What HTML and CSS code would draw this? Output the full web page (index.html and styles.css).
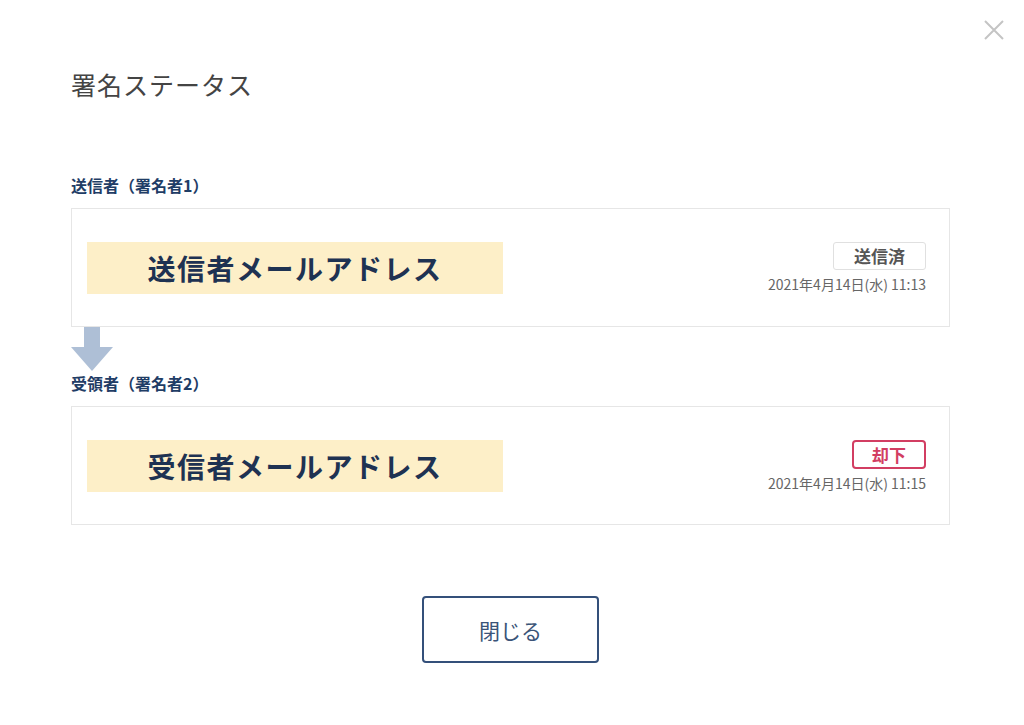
FILE: index.html
```html
<!DOCTYPE html>
<html lang="ja">
<head>
    <meta charset="UTF-8">
    <meta name="viewport" content="width=device-width, initial-scale=1.0">
    <title>署名ステータス</title>
    <link rel="stylesheet" href="styles.css">
</head>
<body>
    <div class="modal">
        <button class="close" aria-label="閉じる">
            <svg width="22" height="22" viewBox="0 0 22 22">
                <path d="M2 2 L20 20 M20 2 L2 20" stroke="#c4c4c4" stroke-width="2" fill="none"/>
            </svg>
        </button>

        <h1 class="title">署名ステータス</h1>

        <div class="signers">
            <!-- 送信者 -->
            <div class="label">送信者（署名者1）</div>
            <div class="card">
                <div class="email">送信者メールアドレス</div>
                <div class="status">
                    <span class="badge">送信済</span>
                    <span class="date">2021年4月14日(水) 11:13</span>
                </div>
            </div>

            <div class="arrow">
                <svg width="42" height="44" viewBox="0 0 42 44">
                    <path d="M13 0 H29 V20 H42 L21 44 L0 20 H13 Z" fill="#aebfd6"/>
                </svg>
            </div>

            <!-- 受領者 -->
            <div class="label">受領者（署名者2）</div>
            <div class="card">
                <div class="email">受信者メールアドレス</div>
                <div class="status">
                    <span class="badge rejected">却下</span>
                    <span class="date">2021年4月14日(水) 11:15</span>
                </div>
            </div>
        </div>

        <div class="footer">
            <button class="btn-close">閉じる</button>
        </div>
    </div>
</body>
</html>
```

FILE: styles.css
```css
/* ページ全体 */
body {
    margin: 0;
    background-color: #fff;
    font-family: "Noto Sans CJK JP", "Noto Sans", sans-serif;
    color: #333;
}

.modal {
    position: relative;
    width: 1024px;
    height: 725px;
    box-sizing: border-box;
    padding: 66px 74px 0 71px;
}

/* 右上の × */
.close {
    position: absolute;
    top: 19px;
    right: 19px;
    padding: 0;
    border: none;
    background: none;
    cursor: pointer;
}

.title {
    margin: 0;
    font-size: 25px;
    font-weight: 400;
    line-height: 36px;
    letter-spacing: 1px;
    color: #444;
}

.signers {
    margin-top: 72px;
}

/* 署名者ラベル */
.label {
    font-size: 16px;
    font-weight: 700;
    line-height: 22px;
    color: #1f3d66;
    margin-bottom: 12px;
}

.card {
    display: flex;
    justify-content: space-between;
    align-items: center;
    height: 119px;
    box-sizing: border-box;
    border: 1px solid #e6e6e6;
    padding: 0 23px 0 15px;
}

.email {
    width: 416px;
    height: 52px;
    background-color: #fdefc8;
    text-align: center;
    font-size: 28px;
    font-weight: 700;
    line-height: 52px;
    color: #1e3252;
    letter-spacing: 1.5px;
}

.status {
    display: flex;
    flex-direction: column;
    align-items: flex-end;
    gap: 5px;
}

.badge {
    display: inline-block;
    min-width: 93px;
    box-sizing: border-box;
    text-align: center;
    border: 1px solid #e0e0e0;
    border-radius: 3px;
    font-size: 17px;
    font-weight: 700;
    line-height: 26px;
    color: #555;
}

.badge.rejected {
    min-width: 74px;
    border-color: #d23e62;
    border-width: 2px;
    border-radius: 4px;
    color: #d23e62;
    line-height: 25px;
}

.date {
    font-size: 14px;
    line-height: 18px;
    color: #666;
}

.arrow {
    height: 45px;
}

.arrow svg {
    display: block;
}

/* 閉じるボタン */
.footer {
    display: flex;
    justify-content: center;
    margin-top: 71px;
}

.btn-close {
    width: 177px;
    height: 67px;
    border: 2px solid #34507a;
    border-radius: 4px;
    background: #fff;
    font-family: inherit;
    font-size: 21px;
    color: #3a5478;
    cursor: pointer;
}
```
